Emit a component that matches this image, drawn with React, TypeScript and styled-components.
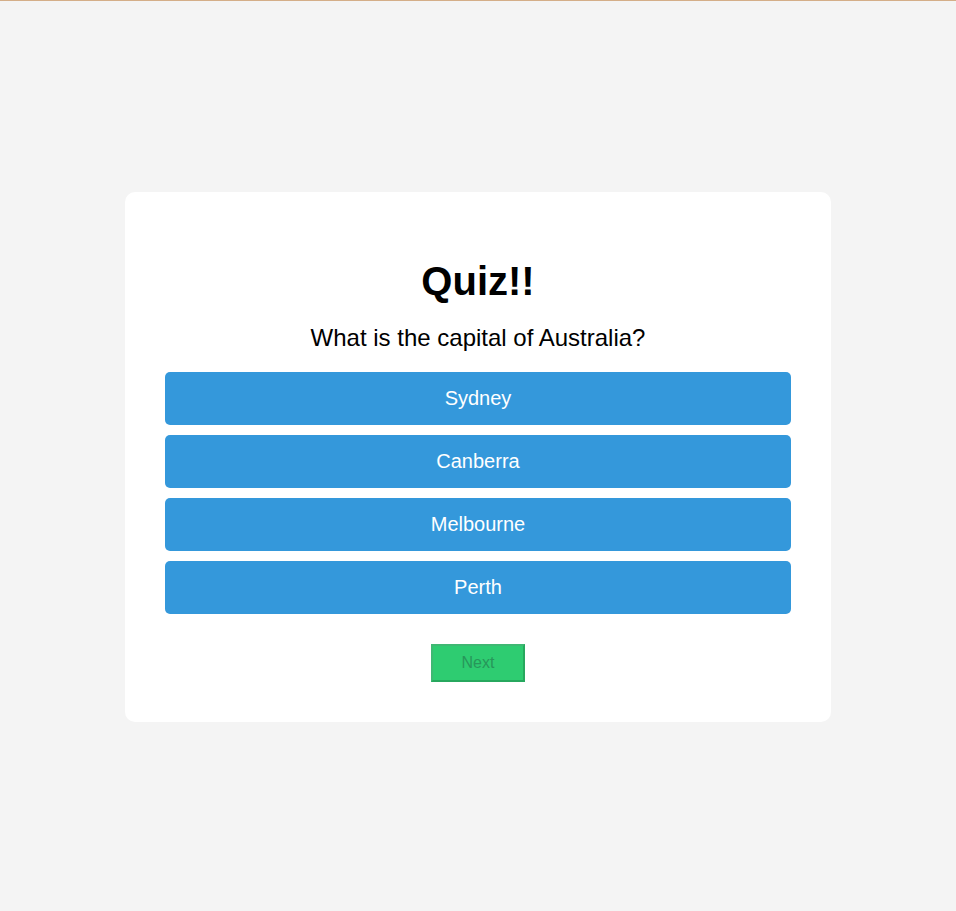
import React from "react";
import styled, { createGlobalStyle } from "styled-components";

const Global = createGlobalStyle`
  html, body { margin: 0; padding: 0; }
  body {
    background: #f4f4f4;
    font-family: "Liberation Sans", Arial, sans-serif;
    border-top: 1px solid #d4ae88;
  }
`;

const Page = styled.div`
  min-height: calc(100vh - 1px);
  box-sizing: border-box;
  padding-top: 2px;
  display: flex;
  align-items: center;
  justify-content: center;
`;

const Card = styled.div`
  width: 706px;
  box-sizing: border-box;
  background: #ffffff;
  border-radius: 10px;
  padding: 40px;
  display: flex;
  flex-direction: column;
  align-items: center;
`;

const Title = styled.h1`
  margin: 26px 0 0;
  font-size: 40px;
  font-weight: bold;
  color: #000;
  line-height: 46px;
`;

const Question = styled.p`
  margin: 20px 0 0;
  font-size: 24px;
  line-height: 28px;
  color: #000;
`;

const Options = styled.div`
  align-self: stretch;
  display: flex;
  flex-direction: column;
  gap: 10px;
  margin-top: 20px;
`;

const Option = styled.button`
  height: 53px;
  border: none;
  border-radius: 5px;
  background: #3498db;
  color: #fff;
  font-family: "Liberation Sans", Arial, sans-serif;
  font-size: 20px;
  cursor: pointer;
`;

const Next = styled.button`
  margin-top: 30px;
  width: 94px;
  height: 38px;
  background: #2ecc71;
  border: 2px solid #27a85e;
  border-top-color: #3fb873;
  border-left-color: #3fb873;
  color: #27965a;
  font-family: "Liberation Sans", Arial, sans-serif;
  font-size: 16px;
`;

const options = ["Sydney", "Canberra", "Melbourne", "Perth"];

export default function App() {
  return (
    <>
      <Global />
      <Page>
        <Card>
          <Title>Quiz!!</Title>
          <Question>What is the capital of Australia?</Question>
          <Options>
            {options.map((o) => (
              <Option key={o}>{o}</Option>
            ))}
          </Options>
          <Next disabled>Next</Next>
        </Card>
      </Page>
    </>
  );
}
